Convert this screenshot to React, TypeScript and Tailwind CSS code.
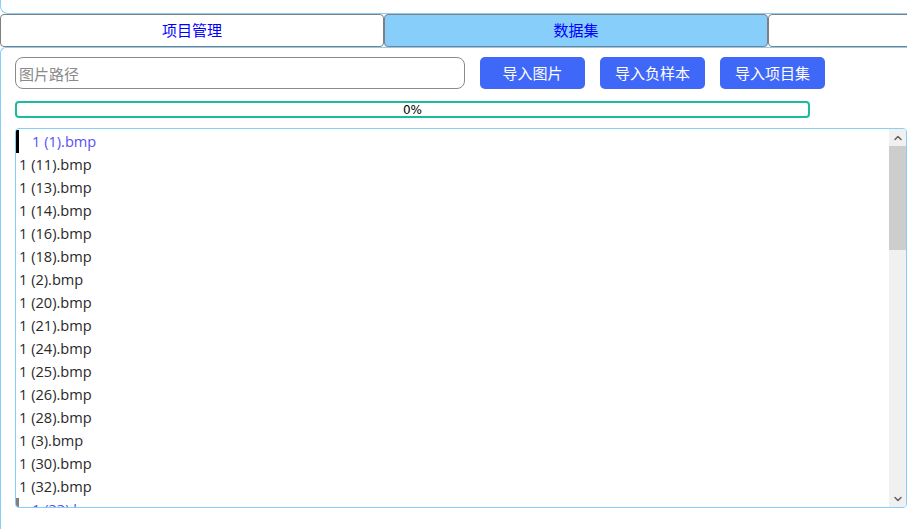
import { ChevronUp, ChevronDown } from 'lucide-react';

const files = [
  '1 (1).bmp',
  '1 (11).bmp',
  '1 (13).bmp',
  '1 (14).bmp',
  '1 (16).bmp',
  '1 (18).bmp',
  '1 (2).bmp',
  '1 (20).bmp',
  '1 (21).bmp',
  '1 (24).bmp',
  '1 (25).bmp',
  '1 (26).bmp',
  '1 (28).bmp',
  '1 (3).bmp',
  '1 (30).bmp',
  '1 (32).bmp',
  '1 (33).bmp',
];

const tabs = ['项目管理', '数据集', ''];
const buttons = ['导入图片', '导入负样本', '导入项目集'];

const cjk = { fontFamily: '"Noto Sans CJK SC", "Noto Sans", sans-serif' };
const latin = { fontFamily: '"Open Sans", "Noto Sans CJK SC", sans-serif' };

export default function App() {
  const current = 0;

  return (
    <div className="w-[907px] h-[529px] overflow-hidden bg-white flex flex-col" style={cjk}>
      <div className="h-[14px] shrink-0 border-l border-b border-[#87cefa] rounded-bl-[8px]" />

      <div className="flex h-[33px] shrink-0 w-[1152px]">
        {tabs.map((t, i) => (
          <div
            key={i}
            className={`w-[384px] shrink-0 flex items-center justify-center border border-[#808080] rounded-[4px] text-[15px] text-[#0000ff] ${
              i === 1 ? 'bg-[#87cefa]' : 'bg-white'
            }`}
          >
            {t}
          </div>
        ))}
      </div>

      <div className="flex-1 border-l border-t border-[#87cefa] rounded-tl-[6px] pl-[14px] pt-[9px]">
        <div className="flex items-center gap-[15px] h-[32px]">
          <input
            placeholder="图片路径"
            className="w-[450px] h-[32px] border border-[#8a8a8a] rounded-[8px] px-[3px] text-[15px] placeholder:text-[#8a8a8a] outline-none"
            style={cjk}
          />
          {buttons.map((b) => (
            <button
              key={b}
              className="w-[105px] h-[32px] bg-[#4068f8] text-white text-[15px] rounded-[5px]"
            >
              {b}
            </button>
          ))}
        </div>

        <div
          className="mt-[12px] w-[795px] h-[17px] border-2 border-[#1abc9c] rounded-[4px] flex items-center justify-center text-[12px] leading-none text-black"
          style={{ fontFamily: '"DejaVu Sans", sans-serif' }}
        >
          0%
        </div>

        <div className="mt-[10px] w-[892px] h-[380px] border border-[#87cefa] rounded-[4px] flex overflow-hidden">
          <div className="flex-1 pt-[1px] overflow-hidden" style={latin}>
            {files.map((f, i) => {
              const sel = i === current;
              const marked = i === files.length - 1;
              return (
                <div key={f} className="h-[23px] flex items-center text-[14.6px] leading-none">
                  {sel || marked ? (
                    <>
                      <span className={`w-[3px] h-[23px] ${sel ? 'bg-black' : 'bg-[#808080]'}`} />
                      <span className="ml-[13px] text-[#5a50f5]">{f}</span>
                    </>
                  ) : (
                    <span className="ml-[3px] text-[#2a2a2a]">{f}</span>
                  )}
                </div>
              );
            })}
          </div>

          <div className="w-[17px] bg-[#f0f0f0] flex flex-col">
            <div className="h-[17px] flex items-center justify-center">
              <ChevronUp className="w-[12px] h-[12px] text-[#606060]" strokeWidth={3} />
            </div>
            <div className="h-[104px] bg-[#cdcdcd]" />
            <div className="flex-1" />
            <div className="h-[17px] flex items-center justify-center">
              <ChevronDown className="w-[12px] h-[12px] text-[#606060]" strokeWidth={3} />
            </div>
          </div>
        </div>
      </div>
    </div>
  );
}
